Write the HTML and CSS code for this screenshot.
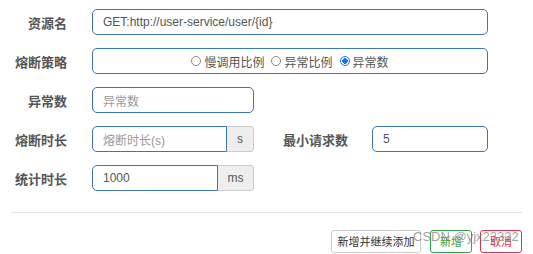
FILE: index.html
```html
<!DOCTYPE html>
<html lang="zh">
<head>
<meta charset="utf-8">
<link rel="stylesheet" href="styles.css">
</head>
<body>
<div class="page">
  <form class="form">
    <div class="row">
      <label class="label">资源名</label>
      <div class="field field-full"><span class="value">GET:http://user-service/user/{id}</span></div>
    </div>
    <div class="row">
      <label class="label">熔断策略</label>
      <div class="field field-full radios">
        <span class="radio"><span class="dot"></span>慢调用比例</span>
        <span class="radio"><span class="dot"></span>异常比例</span>
        <span class="radio checked"><span class="dot"></span>异常数</span>
      </div>
    </div>
    <div class="row">
      <label class="label">异常数</label>
      <div class="field field-half"><span class="placeholder">异常数</span></div>
    </div>
    <div class="row">
      <label class="label">熔断时长</label>
      <div class="group group-s">
        <div class="field grouped"><span class="placeholder">熔断时长(s)</span></div>
        <span class="addon">s</span>
      </div>
      <label class="label label-right">最小请求数</label>
      <div class="field field-small"><span class="value">5</span></div>
    </div>
    <div class="row">
      <label class="label">统计时长</label>
      <div class="group group-ms">
        <div class="field grouped"><span class="value">1000</span></div>
        <span class="addon">ms</span>
      </div>
    </div>
  </form>
  <hr class="divider">
  <div class="actions">
    <button class="btn btn-default" type="button">新增并继续添加</button>
    <button class="btn btn-success" type="button">新增</button>
    <button class="btn btn-danger" type="button">取消</button>
    <span class="watermark">CSDN @yjx23332</span>
  </div>
</div>
</body>
</html>
```

FILE: styles.css
```css
html, body {
  margin: 0;
  padding: 0;
  background: #fff;
}

body {
  font-family: "Liberation Sans", Arial, "Noto Sans CJK SC", sans-serif;
  font-size: 12px;
  color: #555;
}

.page {
  width: 533px;
  height: 254px;
  overflow: hidden;
}

.form {
  display: flex;
  flex-direction: column;
  gap: 13px;
  padding-top: 9px;
}

.row {
  display: flex;
  align-items: center;
  height: 26px;
}

.label {
  width: 67px;
  margin-right: 25px;
  text-align: right;
  font-size: 13px;
  font-weight: bold;
  color: #555;
  font-family: "Noto Sans CJK SC", sans-serif;
}

.label-right {
  width: 94px;
  margin-right: 24px;
}

.field {
  box-sizing: border-box;
  height: 26px;
  border: 1px solid #3a76b3;
  border-radius: 5px;
  display: flex;
  align-items: center;
  padding: 0 10px;
  color: #555;
  background: #fff;
}

.field-full {
  width: 396px;
}

.field-half {
  width: 162px;
}

.field-small {
  width: 116px;
}

.value {
  color: #555;
}

.placeholder {
  color: #999;
}

.radios {
  justify-content: center;
  gap: 7px;
}

.radio {
  display: inline-flex;
  align-items: center;
  gap: 3px;
  color: #555;
}

.dot {
  box-sizing: border-box;
  width: 10px;
  height: 10px;
  border: 1px solid #888;
  border-radius: 50%;
  display: inline-block;
}

.radio.checked .dot {
  border: 1.5px solid #1a73e8;
  background: radial-gradient(circle, #1a73e8 0 2.6px, #fff 3px);
}

.group {
  display: flex;
  height: 26px;
}

.group-s {
  width: 162px;
}

.group-ms {
  width: 162px;
}

.grouped {
  flex: 1;
  border-radius: 5px 0 0 5px;
}

.addon {
  box-sizing: border-box;
  height: 26px;
  display: flex;
  align-items: center;
  justify-content: center;
  background: #eee;
  border: 1px solid #ccc;
  border-left: none;
  border-radius: 0 4px 4px 0;
  color: #555;
}

.group-s .addon {
  width: 27px;
}

.group-ms .addon {
  width: 36px;
}

.divider {
  margin: 21px 11px 0 11px;
  border: none;
  border-top: 1px solid #e5e5e5;
  height: 0;
}

.actions {
  position: relative;
  display: flex;
  justify-content: flex-end;
  gap: 8px;
  margin-top: 17px;
  padding-right: 11px;
}

.btn {
  box-sizing: border-box;
  height: 23px;
  padding: 0;
  font-family: "Noto Sans CJK SC", sans-serif;
  font-size: 11px;
  background: #fff;
  border-radius: 3px;
  border: 1px solid #ccc;
  color: #333;
  line-height: 21px;
}

.btn-default {
  width: 90px;
  margin-right: 1px;
}

.btn-success {
  width: 42px;
  border-color: #2ea64a;
  color: #2ea64a;
}

.btn-danger {
  width: 42px;
  border-color: #dc3545;
  color: #dc3545;
}

.watermark {
  position: absolute;
  left: 413px;
  top: -1px;
  white-space: nowrap;
  font-family: "Liberation Sans", Arial, sans-serif;
  font-size: 13px;
  line-height: 15px;
  color: rgba(120, 120, 120, 0.7);
  pointer-events: none;
}
```
